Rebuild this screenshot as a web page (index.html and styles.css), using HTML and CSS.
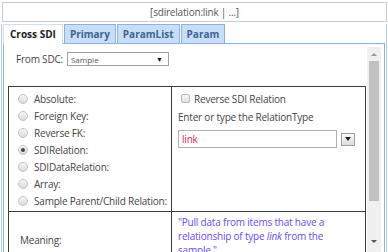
FILE: index.html
```html
<!DOCTYPE html>
<html lang="en">
<head>
    <meta charset="UTF-8">
    <title>SDI Relation</title>
    <link rel="stylesheet" href="styles.css">
</head>
<body>
    <div class="title-bar">[sdirelation:link | ...]</div>
    <div class="frame">
        <div class="tabs">
            <div class="tab active">Cross SDI</div>
            <div class="tab">Primary</div>
            <div class="tab">ParamList</div>
            <div class="tab">Param</div>
        </div>
        <div class="panel">
            <div class="panel-body">
                <div class="sdc-row">
                    <label>From SDC:</label>
                    <div class="select">
                        <span>Sample</span>
                        <span class="select-arrow">&#9660;</span>
                    </div>
                </div>
                <table class="relation-table">
                    <colgroup>
                        <col class="col-left">
                        <col>
                    </colgroup>
                    <tr class="row-main">
                        <td class="cell-left">
                            <div class="radio-row"><span class="radio"></span>Absolute:</div>
                            <div class="radio-row"><span class="radio"></span>Foreign Key:</div>
                            <div class="radio-row"><span class="radio"></span>Reverse FK:</div>
                            <div class="radio-row"><span class="radio checked"></span>SDIRelation:</div>
                            <div class="radio-row"><span class="radio"></span>SDIDataRelation:</div>
                            <div class="radio-row"><span class="radio"></span>Array:</div>
                            <div class="radio-row"><span class="radio"></span>Sample Parent/Child Relation:</div>
                        </td>
                        <td class="cell-right">
                            <div class="check-row"><span class="checkbox"></span>Reverse SDI Relation</div>
                            <div class="hint">Enter or type the RelationType</div>
                            <div class="combo">
                                <div class="combo-input">link</div>
                                <div class="combo-button"><span></span></div>
                            </div>
                        </td>
                    </tr>
                    <tr class="row-meaning">
                        <td class="cell-left meaning-label">Meaning:</td>
                        <td class="cell-right meaning-text">"Pull data from items that have a relationship of type <i>link</i> from the sample."</td>
                    </tr>
                </table>
            </div>
            <div class="scrollbar">
                <div class="scroll-up"></div>
                <div class="scroll-thumb"></div>
                <div class="scroll-down"></div>
            </div>
        </div>
    </div>
</body>
</html>
```

FILE: styles.css
```css
* {
    margin: 0;
    padding: 0;
    box-sizing: border-box;
}

:root {
    --tab-bg: #c8ddf6;
    --tab-border: #8db2e2;
    --tab-text: #3f6491;
    --text: #444444;
    --grid: #3c3c3c;
}

html, body {
    height: 100%;
    overflow: hidden;
}

body {
    font-family: 'Open Sans', 'Noto Sans', sans-serif;
    font-size: 10px;
    letter-spacing: -0.2px;
    color: var(--text);
    background: #ffffff;
}

.title-bar {
    margin: 2px 1px 0 2px;
    height: 20px;
    border: 1px solid #cccccc;
    text-align: center;
    line-height: 18px;
    color: #555555;
}

.frame {
    margin: 2px 1px 0 1px;
    padding: 0 1px;
    border-left: 1px solid #b4cdee;
    border-right: 1px solid #b4cdee;
    height: 240px;
}

.tabs {
    display: flex;
    gap: 1px;
    height: 19px;
}

.tab {
    height: 19px;
    padding: 0 5px;
    border: 1px solid var(--tab-border);
    border-bottom: none;
    background: var(--tab-bg);
    color: var(--tab-text);
    font-size: 10px;
    font-weight: 700;
    letter-spacing: 0;
    line-height: 18px;
}

.tab.active {
    background: #ffffff;
    color: #222222;
    border-color: #d0dff2;
    height: 20px;
    margin-bottom: -1px;
    padding: 0 6px;
    position: relative;
}

.panel {
    border: 1px solid var(--tab-border);
    height: 220px;
    display: flex;
    overflow: hidden;
}

.panel-body {
    flex: 1;
    padding: 7px 0 0 4px;
}

.sdc-row {
    display: flex;
    align-items: center;
    gap: 4px;
    padding-left: 8px;
    height: 16px;
}

.select {
    width: 102px;
    height: 14px;
    border: 1px solid #a0a0a0;
    display: flex;
    justify-content: space-between;
    align-items: center;
    padding: 0 5px 0 3px;
    font-size: 8px;
    letter-spacing: 0;
    color: #555555;
}

.select-arrow {
    font-size: 7px;
    color: #111111;
}

.relation-table {
    margin-top: 19px;
    width: 100%;
    border-collapse: collapse;
    table-layout: fixed;
}

.col-left {
    width: 163px;
}

.relation-table td {
    border: 1px solid var(--grid);
    vertical-align: top;
}

.cell-left {
    padding: 3px 0 2px 9px;
}

.cell-right {
    padding: 3px 6px 0 6px;
}

.radio-row {
    display: flex;
    align-items: center;
    height: 17px;
    white-space: nowrap;
}

.radio {
    width: 10px;
    height: 10px;
    border-radius: 50%;
    border: 1px solid #c4c4c4;
    background: linear-gradient(#f6f6f6, #dadada);
    margin-right: 6px;
    position: relative;
    flex-shrink: 0;
}

.radio.checked::after {
    content: '';
    position: absolute;
    left: 2px;
    top: 2px;
    width: 4px;
    height: 4px;
    border-radius: 50%;
    background: #444444;
}

.check-row {
    display: flex;
    align-items: center;
    height: 17px;
}

.checkbox {
    width: 9px;
    height: 9px;
    border: 1px solid #b8b8b8;
    border-radius: 2px;
    background: linear-gradient(#f8f8f8, #e0e0e0);
    margin: 0 4px 0 3px;
}

.hint {
    height: 18px;
    line-height: 18px;
    margin-top: 1px;
}

.combo {
    display: flex;
    align-items: center;
    margin-top: 4px;
    gap: 4px;
}

.combo-input {
    width: 159px;
    height: 18px;
    border: 1px solid #b0b0b0;
    padding-left: 3px;
    line-height: 16px;
    color: #e0284c;
}

.combo-button {
    width: 14px;
    height: 13px;
    border: 1px solid #a0a0a0;
    background: linear-gradient(#fafafa, #dcdcdc);
    display: flex;
    align-items: center;
    justify-content: center;
}

.combo-button span {
    border-left: 3px solid transparent;
    border-right: 3px solid transparent;
    border-top: 4px solid #222222;
}

.row-meaning td {
    vertical-align: middle;
}

.meaning-label {
    padding-top: 0;
    padding-bottom: 4px;
    padding-left: 11px;
}

.meaning-text {
    padding-top: 3px;
    padding-bottom: 14px;
    line-height: 14px;
    color: #6a4cf2;
    vertical-align: top;
}

.scrollbar {
    width: 14px;
    margin: 3px 3px 0 1px;
    background: #f0f0f0;
    display: flex;
    flex-direction: column;
    align-items: center;
}

.scroll-up,
.scroll-down {
    width: 0;
    height: 0;
    border-left: 3px solid transparent;
    border-right: 3px solid transparent;
}

.scroll-up {
    border-bottom: 3px solid #9a9a9a;
    margin-top: 6px;
}

.scroll-thumb {
    width: 10px;
    height: 140px;
    background: #c1c1c1;
    margin-top: 5px;
}

.scroll-down {
    border-top: 3px solid #555555;
    margin-top: 39px;
}
```
